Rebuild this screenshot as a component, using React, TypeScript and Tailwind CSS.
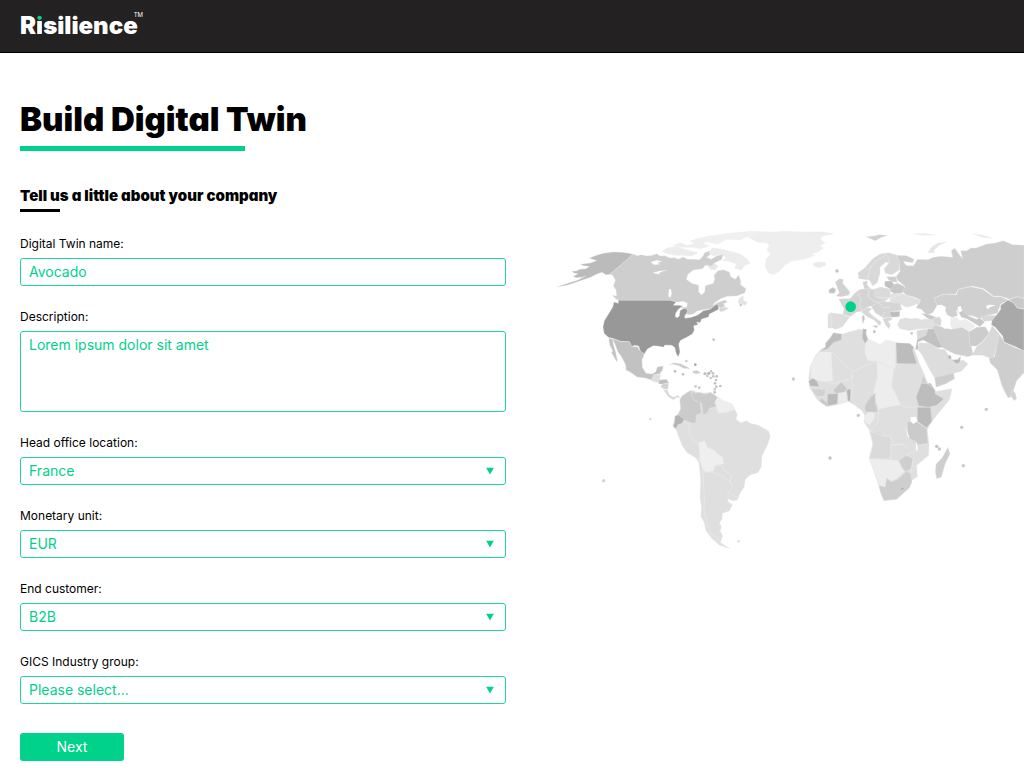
import type { ReactNode } from "react";

type Shape = [color: string, points: string];

const northAmerica: Shape[] = [
  ["#bbbbbb", "250,103 232,99 215,97 190,96 160,100 140,106 118,114 128,118 140,122 120,129 92,133 100,137 118,139 108,146 90,148 78,153 66,154 72,159 84,161 70,169 78,173 96,172 108,168 84,180 56,189 20,201 54,195 95,181 122,172 136,164 155,157 168,164 180,163"],
  ["#cecece", "250,103 262,107 275,104 290,108 308,106 320,101 330,108 345,107 360,114 375,113 384,118 400,111 412,118 430,118 448,119 458,110 464,98 477,93 480,104 470,112 484,118 500,108 518,103 516,118 495,128 484,138 466,136 458,146 430,150 414,163 409,178 425,190 446,196 446,215 454,225 464,216 466,197 490,190 494,178 492,166 504,152 520,149 538,156 542,170 556,178 566,165 572,182 572,194 588,206 584,219 560,228 532,229 512,236 494,248 488,257 505,247 526,240 532,246 520,251 526,258 510,266 504,254 480,266 460,269 440,274 430,282 412,285 408,270 390,262 410,262 412,250 400,244 386,246 375,246 360,241 205,241 194,234 188,226 200,228 198,210 190,198 196,180 188,166 180,163"],
  ["#989898", "205,241 360,241 378,246 370,256 385,256 398,258 385,268 377,280 376,290 382,293 388,288 390,272 400,266 410,266 412,276 404,288 405,295 425,292 445,284 460,272 480,268 498,254 505,255 506,268 492,275 478,282 476,291 455,297 450,308 440,306 444,314 431,317 433,330 427,342 410,352 392,361 386,372 390,396 385,410 379,402 374,382 365,376 345,375 340,382 328,379 310,377 292,387 283,402 272,396 266,378 254,376 245,380 238,365 210,364 197,358 175,352 162,340 159,320 163,302 175,283 188,262 192,246 205,250"],
  ["#c2c2c2", "197,358 210,365 238,365 246,380 262,380 270,392 283,402 276,420 277,442 288,460 306,462 317,456 322,441 340,438 337,451 328,462 312,464 305,480 286,474 262,471 240,456 228,450 227,434 216,413 203,394 195,372 188,358"],
  ["#c2c2c2", "176,354 188,358 190,373 196,393 202,419 201,426 195,416 185,398 188,392 179,375"],
  ["#dedede", "312,464 326,464 332,458 330,474 322,488 304,482"],
  ["#bfbfbf", "326,480 350,478 356,488 340,492 326,492"],
  ["#d2d2d2", "336,493 356,489 354,508 340,506 332,500"],
  ["#d8d8d8", "340,509 352,510 358,524 370,532 384,526 390,534 380,532 371,539 356,532"],
  ["#cccccc", "356,434 372,428 392,431 412,441 420,446 400,445 386,437 370,433"],
  ["#cccccc", "428,454 440,451 452,458 440,462 428,458"],
  ["#d5d5d5", "508,266 524,262 536,265 521,273 510,275"],
  ["#e4e4e4", "566,238 580,226 580,240 592,248 586,256 572,252 564,248"],
];

const arctic: Shape[] = [
  ["#ececec", "336,94 352,84 378,80 400,86 425,94 444,98 424,108 400,106 376,106 352,101"],
  ["#eeeeee", "368,78 390,68 412,76 432,72 420,62 450,57 478,60 458,70 478,78 450,86 430,82 400,82"],
  ["#ececec", "470,100 488,84 516,88 540,94 570,102 592,118 600,130 582,138 574,150 554,144 560,132 536,124 518,122 530,112 510,102 492,108"],
  ["#f0f0f0", "434,58 480,48 536,40 600,34 664,36 622,44 590,50 570,60 530,58 504,72 474,66"],
  ["#e7e7e7", "474,140 490,130 504,138 496,150 482,148"],
  ["#eeeeee", "595,52 640,38 700,34 760,36 822,36 850,41 816,48 812,60 826,68 808,78 820,84 804,96 782,102 795,106 760,118 722,124 704,136 690,152 671,164 655,158 646,140 648,118 662,102 650,90 658,76 650,68 622,66"],
  ["#ebebeb", "788,132 804,126 826,128 828,136 810,143 796,140"],
];

const southAmerica: Shape[] = [
  ["#dfdfdf", "68,170 78,178 86,200 97,228 112,248 138,264 147,280 152,330 150,380 154,410 153,440 162,456 168,482 186,506 208,525 240,536 226,527 211,517 218,498 211,484 214,468 208,460 216,448 217,430 238,423 247,404 235,396 234,386 248,392 262,390 270,370 283,350 286,328 302,314 324,308 334,290 336,258 352,226 361,200 356,183 325,166 300,160 290,152 272,158 258,148 262,133 247,105 215,92 195,84 180,68 150,69 130,62 120,62 95,80 90,105 92,124 76,140"],
  ["#cbcbcb", "125,61 110,68 96,78 89,90 93,115 84,132 101,150 128,160 137,159 140,134 154,130 150,96 134,91 124,74"],
  ["#cbcbcb", "129,62 134,70 150,67 165,73 182,67 204,82 195,96 204,108 178,115 173,128 160,136 155,100 134,91 124,76"],
  ["#b4b4b4", "75,138 86,134 103,149 96,160 84,164 78,176 69,168 73,159"],
  ["#eeeeee", "204,80 220,92 247,101 252,119 233,127 205,130 199,112 195,96"],
  ["#efefef", "146,219 164,212 172,232 190,239 204,253 218,262 222,282 196,286 190,303 166,307 156,291 149,270 149,250"],
];

const southBorders = [
  "101,150 120,170 118,193 132,212 146,219",
  "149,270 140,264",
  "157,292 160,330 163,380 162,420 170,455 182,490 210,512",
  "168,307 192,306 222,322 240,334 248,350 234,368 234,388",
  "196,286 214,286 222,300 244,316 240,334",
  "234,366 266,385",
];

const eurasia: Shape[] = [
  ["#cecece", "290,106 320,107 342,118 338,128 310,124 318,136 340,138 352,118 384,119 400,112 424,109 458,112 454,92 464,84 478,104 488,116 482,92 500,92 512,84 528,84 560,72 585,69 610,62 638,74 672,76 672,235 650,230 628,237 600,228 580,228 552,206 516,198 474,208 468,222 432,222 402,234 412,256 398,278 380,286 364,268 348,264 362,240 344,232 320,226 304,212 316,200 292,180 288,170 300,154 298,128"],
  ["#d0d0d0", "402,235 432,223 470,224 475,208 512,200 548,208 580,230 602,230 624,240 602,252 592,280 564,286 538,296 520,288 502,286 486,270 470,270 472,288 456,292 440,284 432,258 414,260"],
  ["#c9c9c9", "474,274 490,272 506,288 530,298 540,294 554,306 540,320 520,308 500,296 484,292"],
  ["#d7d7d7", "542,290 570,286 590,286 578,302 552,304"],
  ["#a9a9a9", "576,302 592,282 602,268 602,256 624,240 640,248 652,264 672,268 672,394 650,382 612,366 608,348 586,322 574,314"],
  ["#c9c9c9", "626,239 652,230 672,236 672,266 654,264 640,248"],
  ["#ededed", "452,294 468,292 480,302 496,298 526,318 508,334 486,322 456,326 450,308"],
  ["#cfcfcf", "400,312 428,322 452,328 486,322 506,334 510,364 520,404 504,410 464,402 440,390 426,382 410,350 396,326"],
  ["#cccccc", "506,336 530,322 556,320 568,340 548,364 530,378 510,378"],
  ["#d9d9d9", "530,380 552,362 568,338 576,316 598,342 610,360 590,380 582,412 568,414 548,406 516,406"],
  ["#cecece", "598,344 614,368 648,384 672,392 672,458 650,482 634,530 624,534 606,498 592,450 570,428 568,414 584,410"],
  ["#d2d2d2", "636,508 646,520 650,536 642,542 634,530"],
  ["#e0e0e0", "292,314 300,298 322,292 350,294 384,298 404,296 410,310 398,324 352,328 328,332 300,326"],
  ["#c9c9c9", "364,280 390,284 412,294 400,300 384,296"],
  ["#d6d6d6", "398,296 418,290 428,308 420,318 404,312"],
  ["#dadada", "350,332 384,326 380,346 352,360"],
  ["#c1c1c1", "384,326 402,326 412,352 428,382 414,384 390,372 370,360 354,366 356,390 346,388 352,358 378,346"],
  ["#dddddd", "358,368 388,370 418,388 434,388 446,406 464,426 490,420 504,432 484,454 454,462 406,478 386,444 366,404 354,390"],
  ["#cdcdcd", "404,472 434,466 460,458 464,476 436,492 408,502"],
  ["#b9b9b9", "456,420 474,418 482,408 480,426 470,432"],
  ["#d9d9d9", "176,176 174,158 194,144 218,116 240,102 266,98 288,104 300,126 298,150 276,164 256,160 252,146 266,130 258,126 240,142 240,160 232,188 218,198 208,180"],
  ["#d4d4d4", "188,186 202,182 202,196 212,206 194,210"],
  ["#d1d1d1", "106,186 118,176 130,178 128,190 140,204 150,216 146,226 122,230 108,228 118,218 112,204"],
  ["#c3c3c3", "86,210 98,202 108,208 104,220 88,220"],
  ["#d4d4d4", "116,238 130,236 150,236 164,220 180,208 202,206 222,208 240,202 270,208 270,232 246,250 216,258 200,262 186,274 170,276 150,290 128,286 132,266"],
  ["#dadada", "222,208 244,202 270,208 272,232 250,240 224,230"],
  ["#c9c9c9", "270,212 276,194 294,190 314,200 306,220 282,222"],
  ["#c1c1c1", "254,184 276,182 282,196 272,208 254,198"],
  ["#cfcfcf", "260,170 288,170 292,188 276,184 266,180"],
  ["#e1e1e1", "272,222 304,220 326,228 362,240 358,250 336,258 318,262 304,254 270,246"],
  ["#d8d8d8", "184,276 200,262 216,266 206,276 222,290 244,306 240,318 222,300 204,292"],
  ["#d5d5d5", "214,260 238,244 270,246 300,250 306,270 272,276 274,292 250,294 226,278"],
  ["#bebebe", "268,276 300,274 298,290 274,292"],
  ["#d7d7d7", "248,296 270,292 278,298 264,304 272,316 266,326 256,314"],
  ["#dddddd", "84,284 92,278 140,284 150,290 138,306 128,320 108,328 96,324 84,324"],
  ["#c5c5c5", "186,290 192,284 194,298 188,312"],
  ["#c9c9c9", "216,318 234,316 230,324"],
  ["#d0d0d0", "198,50 222,48 238,44 262,46 240,54 226,62"],
  ["#e6e6e6", "384,98 394,82 412,70 440,65 418,76 402,90 404,98"],
  ["#e8e8e8", "520,42 550,46 576,54 548,52"],
  ["#ededed", "340,42 370,40 405,45 370,46"],
];

const eurasiaBorders = [
  "202,178 212,140 232,120 260,104",
  "266,130 268,116 258,106",
  "174,220 184,238 178,254 186,274",
  "206,210 204,230 222,244 240,250",
  "236,232 270,234 304,224",
  "92,284 96,302 92,324",
  "132,266 128,286 150,290",
  "240,252 250,264 270,260",
  "254,276 246,294",
];

const africa: Shape[] = [
  ["#dfdfdf", "120,92 150,74 186,42 240,27 258,38 262,58 300,74 320,62 350,68 392,72 402,84 418,130 434,166 446,196 468,214 516,206 508,240 480,274 450,312 442,330 447,372 446,406 410,436 412,470 394,482 390,498 368,520 350,538 312,542 296,496 284,460 268,416 278,370 268,330 252,306 254,286 246,272 224,256 204,244 172,254 140,260 112,240 88,202 86,176 90,142 108,104"],
  ["#ededed", "92,136 110,106 120,96 154,96 158,182 128,184 92,178"],
  ["#bebebe", "118,92 136,82 136,70 150,54 160,38 186,42 184,60 160,68 142,88"],
  ["#bcbcbc", "248,26 260,28 258,42 264,58 256,72 246,54"],
  ["#ededed", "256,72 266,58 300,74 318,60 346,66 346,146 290,124 264,122 254,98"],
  ["#bcbcbc", "348,68 388,70 402,82 398,90 412,134 350,132"],
  ["#ededed", "290,126 342,146 334,200 346,220 362,254 330,260 296,268 280,220 292,170"],
  ["#b9b9b9", "86,184 98,174 110,182 118,200 90,198"],
  ["#d1d1d1", "94,206 136,208 134,228 112,230 102,218"],
  ["#c9c9c9", "124,234 144,250 142,260 118,244"],
  ["#bcbcbc", "142,222 174,220 172,252 142,258"],
  ["#c9c9c9", "160,210 184,186 202,206 190,218 166,220"],
  ["#ececec", "176,220 198,216 200,246 174,252"],
  ["#b5b5b5", "200,210 212,206 212,242 204,244"],
  ["#cacaca", "254,258 270,232 286,218 286,248 294,276 256,276"],
  ["#ededed", "256,286 266,276 284,280 282,296 268,316 252,302"],
  ["#bdbdbd", "408,232 424,190 452,190 464,208 466,222 492,236 470,256 446,262 416,258"],
  ["#cdcdcd", "424,188 430,164 438,186 462,206 446,192"],
  ["#bbbbbb", "412,262 452,262 456,304 440,324 412,304"],
  ["#cbcbcb", "382,306 408,304 440,326 444,370 412,374 386,356 382,330"],
  ["#dadada", "270,334 304,334 310,348 332,346 332,416 268,416 280,376"],
  ["#ededed", "268,416 334,420 354,422 374,454 350,476 334,482 320,474 314,500 298,496 286,460"],
  ["#cfcfcf", "356,422 378,406 400,416 394,444 378,456 366,444"],
  ["#cecece", "296,496 316,502 320,474 334,486 354,478 380,454 392,460 396,486 388,504 350,538 312,542 302,520"],
  ["#b9b9b9", "360,506 368,500 374,506 366,512"],
  ["#cecece", "466,456 468,432 486,414 504,382 510,402 496,430 484,472 470,476"],
];

const africaBorders = [
  "158,98 218,156 290,122",
  "158,180 128,184 160,190 212,178 218,156",
  "218,166 218,196 212,240",
  "342,148 344,132 414,132",
  "362,256 392,264 410,260",
  "296,268 294,306 272,334",
  "272,334 310,348 332,350 342,376 366,372 380,384",
  "332,416 334,374 366,372",
  "386,356 406,364 412,388 378,406",
  "412,388 410,372",
  "400,416 392,460",
];

const isles: [number, number, number, string][] = [
  [491, 359, 4, "#c4c4c4"], [436, 434, 4, "#aaaaaa"], [409, 423, 4, "#cfcfcf"], [375, 454, 4, "#bfbfbf"],
  [399, 463, 4, "#c2c2c2"], [465, 461, 5, "#c2c2c2"], [476, 460, 5, "#bbbbbb"], [483, 454, 4, "#c8c8c8"],
  [489, 460, 4, "#c2c2c2"], [472, 468, 4, "#c8c8c8"], [490, 469, 4, "#c2c2c2"], [500, 469, 4, "#c2c2c2"],
  [482, 474, 4, "#c8c8c8"], [498, 480, 4, "#c2c2c2"], [495, 490, 4, "#c2c2c2"], [499, 500, 4, "#c2c2c2"],
  [511, 498, 4, "#c2c2c2"], [494, 508, 4, "#c8c8c8"], [494, 517, 4, "#c2c2c2"], [437, 499, 4, "#c8c8c8"],
  [448, 503, 4, "#c8c8c8"], [301, 597, 4, "#dddddd"], [161, 782, 5, "#d2d2d2"], [861, 153, 5, "#c2c2c2"],
  [730, 477, 5, "#cccccc"], [925, 586, 5, "#c8c8c8"], [840, 714, 5, "#c2c2c2"], [1309, 568, 5, "#c8c8c8"],
  [1235, 622, 5, "#c8c8c8"], [1160, 679, 5, "#c2c2c2"], [1168, 687, 5, "#c8c8c8"], [1240, 737, 5, "#c8c8c8"],
  [973, 335, 4, "#bfbfbf"], [572, 255, 4, "#cccccc"], [566, 964, 4, "#e0e0e0"], [1085, 340, 4, "#cccccc"],
  [1199, 411, 5, "#b9b9b9"],
];

function Region({ shapes, x = 0, y = 0, borders = [] }: { shapes: Shape[]; x?: number; y?: number; borders?: string[] }) {
  return (
    <g transform={`translate(${x} ${y})`} strokeLinejoin="round">
      {shapes.map(([color, points]) => (
        <polygon key={points} points={points} fill={color} stroke="#ebebeb" strokeWidth="1" />
      ))}
      {borders.map((points) => (
        <polyline key={points} points={points} fill="none" stroke="#ececec" strokeWidth="2" />
      ))}
    </g>
  );
}

function WorldMap() {
  return (
    <svg viewBox="0 0 1422 1020" className="block w-full" role="img" aria-label="World map">
      <Region shapes={arctic} />
      <Region shapes={northAmerica} />
      <Region shapes={southAmerica} borders={southBorders} x={300} y={450} />
      <Region shapes={africa} borders={africaBorders} x={690} y={300} />
      <Region shapes={eurasia} borders={eurasiaBorders} x={750} />
      <g fill="#ffffff">
        <path d="M302 126l18-5 16 3-14 4 10 5-20 1zM308 158l20-5 26-4-22 7-6 7zM357 208l6-1 2 14-4 12-6-4z" />
        <path d="M1160 256l14-2 14 8-4 12 10 14 8 12-4 24-16 2-10-16 4-10-10-20z" />
        <path d="M1054 272l14-4 14 6 10-8 10 8 22 16-6 10-18-6-20 2-20-6z" />
        <path d="M1222 262l10-4 4 14-8 6zM1308 258l10-4 20 2-16 4-10 8z" />
        <path d="M1082 592l16-2 4 14-12 8-8-8zM1066 618l8 24 6 14-8-8zM1098 662l4 16 2 18-6-10z" />
      </g>
      <g>
        {isles.map(([cx, cy, r, color]) => (
          <circle key={`${cx}-${cy}`} cx={cx} cy={cy} r={r} fill={color} />
        ))}
      </g>
      <circle cx="902" cy="260" r="16" fill="#00d18b" />
    </svg>
  );
}

const control =
  "block w-full rounded-[3px] border border-[#1fd698] bg-white px-2 text-sm text-[#00d18b] outline-none focus:ring-1 focus:ring-[#00d18b]";

function Field({ id, label, children }: { id: string; label: string; children: ReactNode }) {
  return (
    <div className="flex flex-col gap-1.5">
      <label htmlFor={id} className="text-xs leading-4 text-black">
        {label}
      </label>
      {children}
    </div>
  );
}

function SelectField({ id, label, options }: { id: string; label: string; options: string[] }) {
  return (
    <Field id={id} label={label}>
      <div className="relative">
        <select id={id} className={`${control} h-7 appearance-none`}>
          {options.map((option) => (
            <option key={option}>{option}</option>
          ))}
        </select>
        <svg
          viewBox="0 0 8 7"
          className="pointer-events-none absolute top-1/2 right-3 h-[7px] w-2 -translate-y-1/2 fill-[#00d18b]"
          aria-hidden="true"
        >
          <path d="M0 0h8L4 7z" />
        </svg>
      </div>
    </Field>
  );
}

export default function App() {
  return (
    <div className="min-h-screen overflow-x-hidden bg-white font-['Inter',sans-serif] text-black">
      <header className="flex h-[53px] items-center border-b border-black bg-[#232122] px-5">
        <a href="#" className="relative text-[24px] leading-8 font-black text-white">
          R
          <span className="bg-[linear-gradient(#00d18b_36%,#ffffff_36%)] bg-clip-text text-transparent">i</span>
          silience
          <span className="absolute top-0.5 left-full -ml-1 text-[6px] leading-[6px] font-normal">TM</span>
        </a>
      </header>
      <main className="grid grid-cols-[minmax(0,486px)_minmax(0,1fr)] gap-11 pl-5">
        <form onSubmit={(event) => event.preventDefault()}>
          <h1 className="pt-[46px] text-[33px] leading-10 font-black whitespace-nowrap [font-feature-settings:'cv11']">
            Build Digital Twin
          </h1>
          <div className="mt-[7px] h-[5px] w-[225px] bg-[#00d18b]" />
          <h2 className="mt-[35px] text-[15px] leading-5 font-black [font-feature-settings:'cv11']">
            Tell us a little about your company
          </h2>
          <div className="mt-[3px] h-[3px] w-10 bg-black" />
          <div className="mt-6 flex flex-col gap-[23px]">
            <Field id="twin-name" label="Digital Twin name:">
              <input id="twin-name" type="text" defaultValue="Avocado" className={`${control} h-7 pb-0.5`} />
            </Field>
            <Field id="description" label="Description:">
              <textarea
                id="description"
                defaultValue="Lorem ipsum dolor sit amet"
                className={`${control} h-[81px] resize-none py-[3px] leading-5`}
              />
            </Field>
            <SelectField id="location" label="Head office location:" options={["France", "Germany", "United Kingdom"]} />
            <SelectField id="currency" label="Monetary unit:" options={["EUR", "GBP", "USD"]} />
            <SelectField id="customer" label="End customer:" options={["B2B", "B2C"]} />
            <SelectField id="industry" label="GICS Industry group:" options={["Please select...", "Energy", "Materials"]} />
          </div>
          <button type="submit" className="mt-[29px] block h-7 w-[104px] rounded-[3px] bg-[#00d18b] text-sm text-white">
            Next
          </button>
        </form>
        <div className="pt-[167px]">
          <WorldMap />
        </div>
      </main>
    </div>
  );
}
